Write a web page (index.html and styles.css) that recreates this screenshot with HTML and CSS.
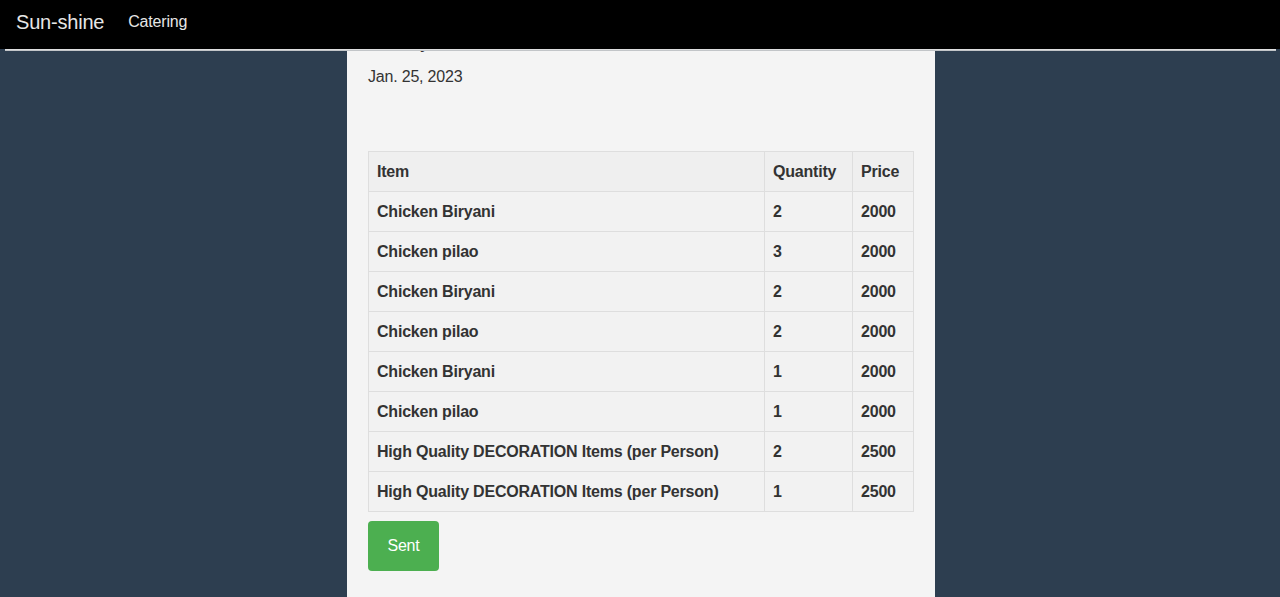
FILE: index.html
```html
<!DOCTYPE html>
<html lang="en">
<head>
<meta charset="utf-8">
<title>Sun-shine Catering</title>
<link rel="stylesheet" href="styles.css">
</head>
<body>
<nav class="navbar">
  <a class="brand" href="#">Sun-shine</a>
  <a class="nav-link" href="#">Catering</a>
</nav>
<div class="page">
  <main class="panel">
    <p class="label">Delivery Date</p>
    <p class="date">Jan. 25, 2023</p>
    <table class="items">
      <thead>
        <tr><th class="col-item">Item</th><th class="col-qty">Quantity</th><th class="col-price">Price</th></tr>
      </thead>
      <tbody>
        <tr><td>Chicken Biryani</td><td>2</td><td>2000</td></tr>
        <tr><td>Chicken pilao</td><td>3</td><td>2000</td></tr>
        <tr><td>Chicken Biryani</td><td>2</td><td>2000</td></tr>
        <tr><td>Chicken pilao</td><td>2</td><td>2000</td></tr>
        <tr><td>Chicken Biryani</td><td>1</td><td>2000</td></tr>
        <tr><td>Chicken pilao</td><td>1</td><td>2000</td></tr>
        <tr><td>High Quality DECORATION Items (per Person)</td><td>2</td><td>2500</td></tr>
        <tr><td>High Quality DECORATION Items (per Person)</td><td>1</td><td>2500</td></tr>
      </tbody>
    </table>
    <button class="btn-sent" type="button">Sent</button>
  </main>
</div>
</body>
</html>
```
FILE: styles.css
```css
* { box-sizing: border-box; }
html, body { margin: 0; padding: 0; }
body {
  background: #2d3e50;
  font-family: "Liberation Sans", Arial, sans-serif;
  font-size: 16px;
  letter-spacing: -0.2px;
  color: #333;
  min-height: 100vh;
}
.navbar {
  position: fixed;
  top: 0; left: 0; right: 0;
  height: 49px;
  background: #000;
  display: flex;
  align-items: center;
  padding: 0 16px;
  gap: 24px;
  z-index: 10;
}
.navbar::after {
  content: "";
  position: absolute;
  left: 5px; right: 4px; bottom: -2px;
  height: 2px;
  background: linear-gradient(#ececec, #b4b8bc);
}
.brand {
  color: #e6e6e6;
  font-size: 20px;
  text-decoration: none;
  line-height: 20px;
  margin-top: -5px;
}
.nav-link {
  color: #e6e6e6;
  font-size: 16px;
  text-decoration: none;
  line-height: 20px;
  margin-top: -5px;
}
.page {
  padding-left: 2px;
  min-height: 100vh;
}
.panel {
  width: 588px;
  margin: 0 auto;
  min-height: 100vh;
  background: #f4f4f4;
  padding: 0 21px 24px 21px;
  display: flex;
  flex-direction: column;
  align-items: flex-start;
}
.label {
  margin: 33px 0 0 0;
  line-height: 22px;
  font-weight: bold;
}
.date {
  margin: 11px 0 0 0;
  line-height: 22px;
}
.items {
  margin-top: 63px;
  width: 546px;
  border-collapse: collapse;
  background: #f2f2f2;
}
.items th, .items td {
  border: 1px solid #dedede;
  height: 40px;
  padding: 0 8px;
  text-align: left;
  font-weight: bold;
  line-height: 20px;
}
.items thead th { background: #efefef; }
.col-qty { width: 88px; }
.col-price { width: 61px; }
.btn-sent {
  margin-top: 9px;
  width: 71px;
  height: 50px;
  background: #4caf50;
  color: #fff;
  border: 0;
  border-radius: 4px;
  font-family: "Liberation Sans", Arial, sans-serif;
  font-size: 16px;
  letter-spacing: -0.2px;
  cursor: pointer;
}
```
